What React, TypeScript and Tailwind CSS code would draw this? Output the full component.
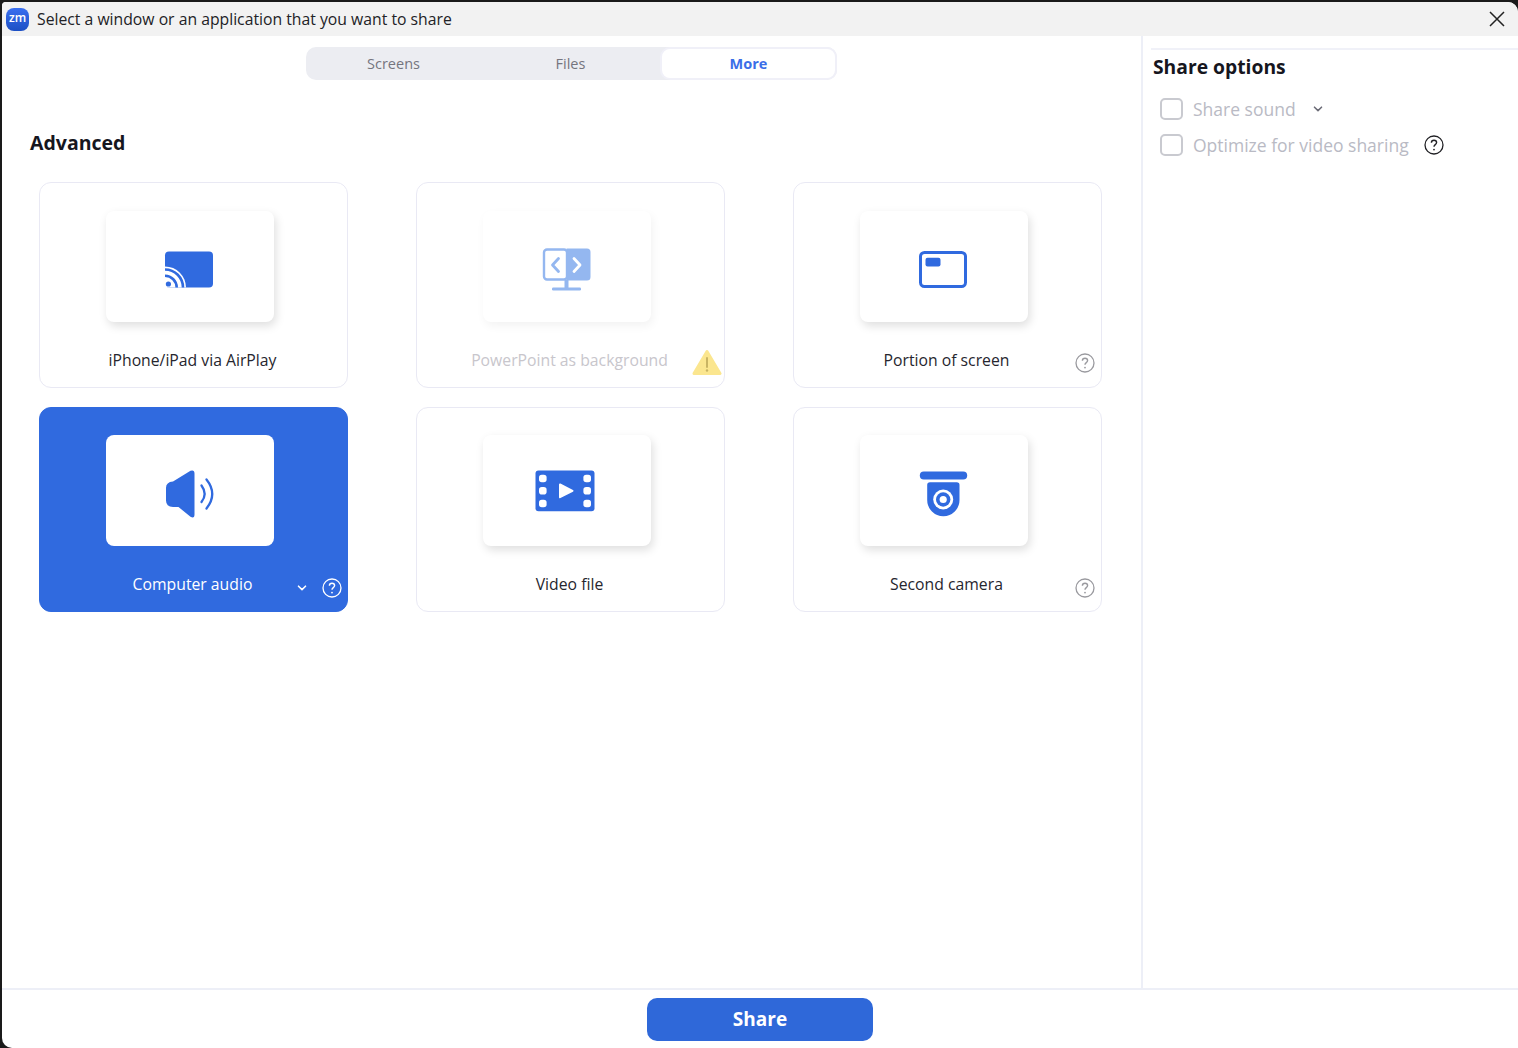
import type { ReactNode } from 'react';

const font = "font-['Open_Sans',sans-serif]";

function IconBox({ children, color = 'text-[#306adf]' }: { children: ReactNode; color?: string }) {
  return (
    <svg width="72" height="72" viewBox="-6 -6 72 72" className={color} fill="currentColor">
      {children}
    </svg>
  );
}

function HelpIcon({ className }: { className: string }) {
  return (
    <svg width="20" height="20" viewBox="0 0 20 20" fill="none" stroke="currentColor" className={className}>
      <circle cx="10" cy="10" r="9" strokeWidth="1.3" />
      <path d="M7.4 7.8c0-1.5 1.1-2.5 2.6-2.5s2.6 1 2.6 2.3c0 2-2.6 2-2.6 4.1" strokeWidth="1.4" />
      <circle cx="10" cy="14.6" r="0.9" fill="currentColor" stroke="none" />
    </svg>
  );
}

function Chevron({ className }: { className: string }) {
  return (
    <svg width="10" height="6" viewBox="0 0 10 6" fill="none" stroke="currentColor" strokeWidth="1.6" strokeLinecap="round" strokeLinejoin="round" className={className}>
      <path d="M1.5 1.2 5 4.6l3.5-3.4" />
    </svg>
  );
}

const AirPlayIcon = (
  <IconBox>
    <rect x="5" y="14.5" width="48" height="36" rx="4" />
    <path d="M5 29.5a21 21 0 0 1 21 21H5z" fill="#fff" />
    <path d="M5 32.5a18 18 0 0 1 18 18" fill="none" stroke="currentColor" strokeWidth="2.6" />
    <path d="M5 38.8a11.7 11.7 0 0 1 11.7 11.7" fill="none" stroke="currentColor" strokeWidth="2.6" />
    <circle cx="8.4" cy="47" r="2.6" />
  </IconBox>
);

const PowerPointIcon = (
  <IconBox color="text-[#94b7f0]">
    <path d="M29.5 11.5H50a3.5 3.5 0 0 1 3.5 3.5V40a3.5 3.5 0 0 1-3.5 3.5H29.5z" />
    <rect x="7" y="12.5" width="23" height="30" rx="3" fill="#fff" stroke="currentColor" strokeWidth="2.4" />
    <rect x="27.5" y="43" width="4" height="8" />
    <rect x="15" y="50.5" width="29" height="3" rx="1.2" />
    <path d="M21.5 21.5 15.5 28l6 6.5" fill="none" stroke="currentColor" strokeWidth="2.8" strokeLinecap="round" strokeLinejoin="round" />
    <path d="M37 21.5 43 28l-6 6.5" fill="none" stroke="#fff" strokeWidth="2.8" strokeLinecap="round" strokeLinejoin="round" />
  </IconBox>
);

const PortionIcon = (
  <IconBox>
    <rect x="6.5" y="15.5" width="45" height="34" rx="4" fill="none" stroke="currentColor" strokeWidth="3" />
    <rect x="11.5" y="20.8" width="15" height="8.7" rx="2" />
  </IconBox>
);

const SpeakerIcon = (
  <IconBox>
    <path d="M13 20.5 30.5 9.8Q34.5 8.6 34.5 12.5V53.5Q34.5 57.8 30.5 55.8L18.5 46H13Q6 45.5 6 39.5V27Q6 21 13 20.5Z" />
    <path d="M41.5 24.5Q47.8 33 41.5 41" fill="none" stroke="currentColor" strokeWidth="2.3" strokeLinecap="round" />
    <path d="M46.5 18.5Q58 33 46.5 47.5" fill="none" stroke="currentColor" strokeWidth="2.3" strokeLinecap="round" />
  </IconBox>
);

const VideoIcon = (
  <IconBox>
    <rect x="-1.5" y="9.5" width="59" height="40.7" rx="3" />
    {[17.5, 29.8, 42.5].map(y => (
      <g key={y} fill="#fff">
        <rect x="2" y={y - 3.8} width="7.6" height="7.6" rx="2.8" />
        <rect x="46.4" y={y - 3.8} width="7.6" height="7.6" rx="2.8" />
      </g>
    ))}
    <path d="M23 23.5 35.5 29.8 23 36.2z" fill="#fff" stroke="#fff" strokeWidth="2" strokeLinejoin="round" />
  </IconBox>
);

const CameraIcon = (
  <IconBox>
    <rect x="5.8" y="10.5" width="47.4" height="8" rx="4" />
    <path d="M13.2 24q0-2.8 2.8-2.8H42.7q2.8 0 2.8 2.8V39a16.15 16.15 0 0 1-32.3 0z" />
    <circle cx="29.2" cy="38.5" r="10" fill="#fff" />
    <circle cx="29.2" cy="38.5" r="7.2" />
    <circle cx="29.2" cy="38.5" r="3.6" fill="#fff" />
  </IconBox>
);

function Card({
  icon,
  label,
  selected,
  disabled,
  lower,
  children,
}: {
  icon: ReactNode;
  label: string;
  selected?: boolean;
  disabled?: boolean;
  lower?: boolean;
  children?: ReactNode;
}) {
  return (
    <div
      className={`relative rounded-[12px] border pl-[66px] ${lower ? 'h-[205px] pt-[27px]' : 'h-[206px] pt-[28px]'} ${
        selected ? 'border-[#306adf] bg-[#306adf]' : 'border-[#e9e9f4] bg-white'
      }`}
    >
      <div
        className={`flex h-[111px] w-[168px] items-center justify-center rounded-[8px] bg-white ${
          selected ? '' : disabled ? 'shadow-[2px_4px_10px_rgba(0,0,0,0.05)]' : 'shadow-[2px_4px_10px_rgba(0,0,0,0.13)]'
        }`}
      >
        {icon}
      </div>
      <div
        className={`-ml-[66px] mt-[26px] pr-[2px] text-center text-[15.75px] leading-[24px] ${
          selected ? 'text-white' : disabled ? 'text-[#c8c6cc]' : 'text-[#26262e]'
        }`}
      >
        {label}
      </div>
      {children}
    </div>
  );
}

export default function App() {
  return (
    <div className={`h-[1048px] w-[1518px] overflow-hidden bg-[#1a1a1a] pt-[2px] pl-[2px] ${font}`}>
      <div className="flex h-[1046px] flex-col overflow-hidden rounded-tl-[4px] rounded-tr-[10px] rounded-bl-[10px] bg-white">
        {/* Title bar */}
        <div className="flex h-[34px] shrink-0 items-center bg-[#f2f2f2] pl-[4px] pr-[13px]">
          <div className="flex h-[23px] w-[23px] items-center justify-center rounded-[8px] bg-gradient-to-b from-[#3a6ff0] to-[#1c4fc4] pb-[2px] text-[12px] font-semibold leading-none text-white">
            zm
          </div>
          <span className="ml-[8px] pt-[1px] text-[15.75px] text-[#222226]">Select a window or an application that you want to share</span>
          <svg width="16" height="16" viewBox="0 0 16 16" fill="none" stroke="#222" strokeWidth="1.5" className="ml-auto">
            <path d="M1 1l14 14M15 1 1 15" />
          </svg>
        </div>

        <div className="flex min-h-0 flex-1">
          {/* Left column */}
          <div className="w-[1139px] shrink-0 border-r-2 border-[#edeff7] box-content">
            <div className="ml-[304px] mt-[11px] flex h-[33px] w-[531px] items-center rounded-[10px] bg-[#ecedf2] text-[14.5px] text-[#75757e]">
              <div className="w-[175px] text-center">Screens</div>
              <div className="w-[179px] text-center">Files</div>
              <div className="flex h-[33px] w-[177px] items-center justify-center rounded-[10px] border-2 border-[#f0f0f8] bg-white font-bold text-[#3b6ee8]">
                More
              </div>
            </div>

            <h2 className="ml-[28px] mt-[48px] text-[19.5px] font-bold leading-[30px] text-[#16161e]">Advanced</h2>

            <div className="ml-[37px] mt-[24px] grid w-[1063px] grid-cols-[repeat(3,309px)] gap-x-[68px] gap-y-[19px]">
              <Card icon={AirPlayIcon} label="iPhone/iPad via AirPlay" />
              <Card icon={PowerPointIcon} label="PowerPoint as background" disabled>
                <svg width="30" height="27" viewBox="0 0 30 27" className="absolute right-[2px] top-[166px]">
                  <path d="M15 2.5 28 24.5H2z" fill="#fbe68f" stroke="#fbe68f" strokeWidth="3" strokeLinejoin="round" />
                  <path d="M15 9v9" stroke="#c9b463" strokeWidth="2" strokeLinecap="round" />
                  <circle cx="15" cy="21.5" r="1.2" fill="#c9b463" />
                </svg>
              </Card>
              <Card icon={PortionIcon} label="Portion of screen">
                <HelpIcon className="absolute right-[6px] top-[170px] text-[#9a9a9f]" />
              </Card>
              <Card icon={SpeakerIcon} label="Computer audio" selected lower>
                <Chevron className="absolute right-[40px] top-[177px] text-white" />
                <HelpIcon className="absolute right-[5px] top-[170px] text-white" />
              </Card>
              <Card icon={VideoIcon} label="Video file" lower />
              <Card icon={CameraIcon} label="Second camera" lower>
                <HelpIcon className="absolute right-[6px] top-[170px] text-[#9a9a9f]" />
              </Card>
            </div>
          </div>

          {/* Share options */}
          <div className="min-w-0 flex-1 pt-[12px]">
            <div className="ml-[8px] h-[2px] bg-[#f0f1f8]" />
            <h3 className="ml-[10px] mt-[2px] text-[19.3px] font-bold leading-[30px] text-[#16161e]">Share options</h3>
            <div className="ml-[17px] mt-[16px] flex h-[22px] items-center text-[17.5px] text-[#b9bac4]">
              <span className="h-[22px] w-[23px] rounded-[5px] border-2 border-[#c9cad0]" />
              <span className="ml-[10px]">Share sound</span>
              <Chevron className="ml-[17px] text-[#6d6d78]" />
            </div>
            <div className="ml-[17px] mt-[14px] flex h-[22px] items-center text-[17.5px] text-[#b9bac4]">
              <span className="h-[22px] w-[23px] rounded-[5px] border-2 border-[#c9cad0]" />
              <span className="ml-[10px]">Optimize for video sharing</span>
              <HelpIcon className="ml-[15px] text-[#222226]" />
            </div>
          </div>
        </div>

        {/* Footer */}
        <div className="flex h-[60px] shrink-0 items-start justify-center border-t-2 border-[#edeff7] pt-[8px]">
          <button className="h-[43px] w-[226px] rounded-[10px] bg-[#2f68d9] text-[19px] font-bold text-white">Share</button>
        </div>
      </div>
    </div>
  );
}
